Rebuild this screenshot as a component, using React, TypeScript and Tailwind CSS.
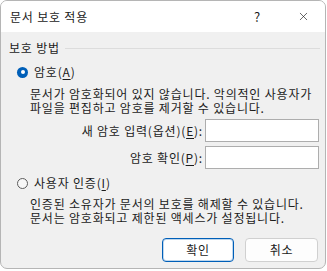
import { X } from 'lucide-react';

const font = { fontFamily: '"Noto Sans CJK KR", "Noto Sans", sans-serif' };

function Radio({ checked }: { checked?: boolean }) {
  if (checked) {
    return (
      <span className="w-[11px] h-[11px] rounded-full bg-[#005fb8] flex items-center justify-center shrink-0">
        <span className="w-[4px] h-[4px] rounded-full bg-white" />
      </span>
    );
  }
  return <span className="w-[11px] h-[11px] rounded-full border border-[#5c5c5c] bg-[#f7f7f7] shrink-0" />;
}

function Field({ label, mnemonic }: { label: string; mnemonic: string }) {
  return (
    <div className="flex items-center justify-end">
      <span className="leading-[14px] mr-[2px]">
        {label}(<span className="underline underline-offset-2">{mnemonic}</span>):
      </span>
      <div className="w-[114px] h-[23px] bg-white border border-[#adadad]" />
    </div>
  );
}

export default function App() {
  return (
    <div className="w-[327px] h-[271px] bg-white text-[12px] text-[#1b1b1b] tracking-[0.8px]" style={font}>
      <div className="w-[326px] h-[269px] rounded-[7px] border border-[#b5b5b5] overflow-hidden flex flex-col bg-[#f0f0f0]">
        <div className="h-[31px] bg-white flex items-center pl-[9px] shrink-0">
          <span className="flex-1 leading-[14px]">문서 보호 적용</span>
          <span className="w-[14px] text-[13px] leading-[14px] mr-[29px]">?</span>
          <X size={13} strokeWidth={1.2} className="mr-[15px] text-[#1b1b1b]" />
        </div>

        <div className="flex flex-col pl-[8px] pr-[5px] pt-[9px]">
          <div className="flex items-center">
            <span className="leading-[14px]">보호 방법</span>
            <span className="flex-1 h-px bg-[#dcdcdc] ml-[5px]" />
          </div>

          <div className="flex items-center pl-[8px] mt-[10px] gap-[6px]">
            <Radio checked />
            <span className="leading-[14px]">
              암호(<span className="underline underline-offset-2">A</span>)
            </span>
          </div>

          <p className="pl-[21px] mt-[8px] leading-[14px]">
            문서가 암호화되어 있지 않습니다. 악의적인 사용자가
            <br />
            파일을 편집하고 암호를 제거할 수 있습니다.
          </p>

          <div className="flex flex-col gap-[4px] mt-[4px] pr-[1px]">
            <Field label="새 암호 입력(옵션)" mnemonic="E" />
            <Field label="암호 확인" mnemonic="P" />
          </div>

          <div className="flex items-center pl-[8px] mt-[7px] gap-[6px]">
            <Radio />
            <span className="leading-[14px]">
              사용자 인증(<span className="underline underline-offset-2">I</span>)
            </span>
          </div>

          <p className="pl-[21px] mt-[7px] leading-[14px]">
            인증된 소유자가 문서의 보호를 해제할 수 있습니다.
            <br />
            문서는 암호화되고 제한된 액세스가 설정됩니다.
          </p>

          <div className="flex justify-end gap-[11px] mt-[13px] pr-[2px]">
            <button className="w-[72px] h-[24px] rounded-[4px] bg-white border border-[#005fb8] shadow-[inset_0_0_0_1px_rgba(0,95,184,0.25)] leading-[14px]">
              확인
            </button>
            <button className="w-[73px] h-[24px] rounded-[4px] bg-[#fdfdfd] border border-[#d0d0d0] leading-[14px]">
              취소
            </button>
          </div>
        </div>
      </div>
    </div>
  );
}
